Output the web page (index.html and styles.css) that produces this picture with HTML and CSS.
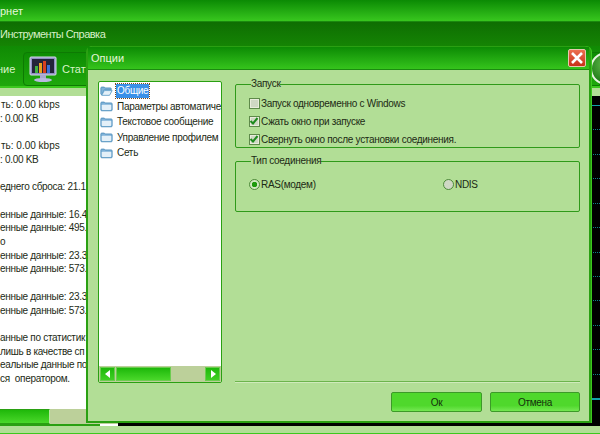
FILE: index.html
```html
<!DOCTYPE html>
<html lang="ru">
<head>
<meta charset="utf-8">
<title>Опции</title>
<link rel="stylesheet" href="styles.css">
</head>
<body>
<div class="app">
  <div class="titlebar">рнет</div>
  <div class="menubar">Инструменты Справка</div>
  <div class="toolbar">
    <span class="tool-text tool-lead">ние</span>
    <div class="tab">
      <svg class="monitor" width="28" height="27" viewBox="0 0 28 27">
        <rect x="1" y="1" width="26" height="18" rx="1" fill="#8f8fc4" stroke="#d8d8ee"/>
        <rect x="3" y="3" width="22" height="14" fill="#23233a"/>
        <rect x="6" y="10" width="3" height="7" fill="#3fb03f"/>
        <rect x="10" y="7" width="3" height="10" fill="#e8a020"/>
        <rect x="14" y="5" width="3" height="12" fill="#d84020"/>
        <rect x="18" y="9" width="3" height="8" fill="#3a70d8"/>
        <rect x="11" y="19" width="6" height="4" fill="#a8a8d0"/>
        <ellipse cx="14" cy="24" rx="9" ry="2" fill="#b8b8e0"/>
      </svg>
      <span class="tool-text">Стати</span>
    </div>
  </div>
  <div class="band"></div>
  <div class="main">
    <div class="stats">
      <div class="stats-text">
        <p class="rate">ть: 0.00 kbps</p>
        <p>: 0.00 KB</p>
        <p>&nbsp;</p>
        <p class="rate">ть: 0.00 kbps</p>
        <p>: 0.00 KB</p>
        <p>&nbsp;</p>
        <p>еднего сброса: 21.1</p>
        <p>&nbsp;</p>
        <p>енные данные: 16.4</p>
        <p>енные данные: 495.</p>
        <p>о</p>
        <p>енные данные: 23.3</p>
        <p>енные данные: 573.</p>
        <p>&nbsp;</p>
        <p>енные данные: 23.3</p>
        <p>енные данные: 573.</p>
        <p>&nbsp;</p>
        <p>анные по статистик</p>
        <p>лишь в качестве сп</p>
        <p>еальные данные по</p>
        <p>ся&nbsp; оператором.</p>
      </div>
      <div class="stats-scroll"><div class="stats-thumb"></div></div>
      <div class="stats-foot"></div>
    </div>
    <div class="chart">
      <div class="chart-grid">
        <div class="cell"></div><div class="cell"></div><div class="cell"></div><div class="cell"></div>
        <div class="cell"></div><div class="cell"></div><div class="cell"></div><div class="cell"></div>
        <div class="cell"></div><div class="cell"></div><div class="cell"></div><div class="cell"></div>
      </div>
    </div>
  </div>
  <div class="statusbar"></div>
</div>

<div class="orb-clip"><div class="orb"></div></div>

<section class="dialog">
  <header class="dialog-title">
    <span>Опции</span>
    <button class="close" aria-label="Закрыть">
      <svg width="14" height="14" viewBox="0 0 14 14"><path d="M2 2 12 12M12 2 2 12" stroke="#fff" stroke-width="2.6"/></svg>
    </button>
  </header>
  <div class="dialog-body">
    <div class="panes">
      <div class="tree">
        <ul class="tree-list">
          <li class="tree-item">
            <svg class="folder" width="13" height="12" viewBox="0 0 15 13"><path d="M1 10V3q0-1 1-1h3l1 1h6q1 0 1 1v1H5L2 11z" fill="#7fb2d8" stroke="#4f8fbc"/><path d="M2 11.500 5 6h9l-3 5.500z" fill="#e4f0f8" stroke="#5f9fc8"/></svg>
            <span class="tree-label selected">Общие</span>
          </li>
          <li class="tree-item">
            <svg class="folder" width="13" height="12" viewBox="0 0 15 13"><use href="#fold"/></svg>
            <span class="tree-label">Параметры автоматичес</span>
          </li>
          <li class="tree-item">
            <svg class="folder" width="13" height="12" viewBox="0 0 15 13"><use href="#fold"/></svg>
            <span class="tree-label">Текстовое сообщение</span>
          </li>
          <li class="tree-item">
            <svg class="folder" width="13" height="12" viewBox="0 0 15 13"><use href="#fold"/></svg>
            <span class="tree-label">Управление профилем</span>
          </li>
          <li class="tree-item">
            <svg class="folder" width="13" height="12" viewBox="0 0 15 13"><use href="#fold"/></svg>
            <span class="tree-label">Сеть</span>
          </li>
        </ul>
        <div class="hscroll">
          <div class="arrow-btn"><svg width="6" height="8" viewBox="0 0 6 8"><path d="M5 0V8L0 4z" fill="#fff"/></svg></div>
          <div class="hthumb"></div>
          <div class="htrack"></div>
          <div class="arrow-btn"><svg width="6" height="8" viewBox="0 0 6 8"><path d="M1 0V8L6 4z" fill="#fff"/></svg></div>
        </div>
      </div>
      <div class="settings">
        <fieldset class="group group-start">
          <legend>Запуск</legend>
          <label class="check"><span class="box"></span>Запуск одновременно с Windows</label>
          <label class="check"><span class="box"><svg width="10" height="10" viewBox="0 0 10 10"><path d="M1.500 5 4 7.500 8.500 2" fill="none" stroke="#1d8a1d" stroke-width="2"/></svg></span>Сжать окно при запуске</label>
          <label class="check"><span class="box"><svg width="10" height="10" viewBox="0 0 10 10"><path d="M1.500 5 4 7.500 8.500 2" fill="none" stroke="#1d8a1d" stroke-width="2"/></svg></span>Свернуть окно после установки соединения.</label>
        </fieldset>
        <fieldset class="group group-type">
          <legend>Тип соединения</legend>
          <div class="radios">
            <label class="radio"><span class="dot on"></span>RAS(модем)</label>
            <label class="radio"><span class="dot"></span>NDIS</label>
          </div>
        </fieldset>
      </div>
    </div>
    <div class="rule"></div>
    <div class="actions">
      <button class="btn btn-ok">Ок</button>
      <button class="btn btn-cancel">Отмена</button>
    </div>
  </div>
</section>

<svg class="defs" width="0" height="0"><defs><g id="fold"><path d="M1 11V3q0-1 1-1h3l1 1h7q1 0 1 1v7q0 1-1 1H2q-1 0-1-1z" fill="#7fb2d8" stroke="#4f8fbc"/><rect x="2" y="5" width="11" height="6" rx="1" fill="#e4f0f8"/></g></defs></svg>
</body>
</html>
```
FILE: styles.css
```css
* { box-sizing: border-box; }
html, body { margin: 0; padding: 0; }
body {
  width: 600px; height: 434px; overflow: hidden; position: relative;
  font-family: "Liberation Sans", "Noto Sans", sans-serif;
  font-size: 10px; letter-spacing: -0.3px; color: #1c2a14; background: #b2de96;
}
.app { display: flex; flex-direction: column; height: 434px; }
.titlebar {
  height: 22px; flex: none; padding-top: 5px; font-size: 11px; letter-spacing: 0; color: #e8f8dc;
  background: linear-gradient(#0b8a04, #38c71e); border-bottom: 1px solid #1a8a0e;
}
.menubar {
  height: 24px; flex: none; padding-top: 6px; font-size: 11px; letter-spacing: -0.5px; color: #d8f0c8;
  background: linear-gradient(#0e6e02, #158404);
}
.toolbar {
  height: 42px; flex: none; display: flex; align-items: center; padding-top: 6px;
  background: linear-gradient(#108a04, #1fa80c);
  border-bottom: 2px solid #3cc81e;
}
.band { height: 8px; flex: none; background: #b2de96; }
.tool-text { font-size: 11px; letter-spacing: 0; color: #d8f4c6; }
.tool-lead { width: 23px; flex: none; text-indent: -3px; }
.tab {
  height: 34px; flex: 1; display: flex; align-items: center; gap: 5px; padding-left: 5px;
  border: 1px solid #0d7a03; border-radius: 4px 0 0 4px; background: linear-gradient(#0d8c03, #1fa80c);
}
.main { flex: 1; display: flex; min-height: 0; }
.stats { width: 118px; flex: none; display: flex; flex-direction: column; background: #fff; }
.stats-text { flex: 1; padding-top: 2px; font-size: 10px; line-height: 13.700px; white-space: nowrap; overflow: hidden; }
.stats-text p { margin: 0; }
.stats-text .rate { padding-left: 1px; letter-spacing: 0; }
.stats-scroll { height: 15px; flex: none; background: #bcd09a; }
.stats-thumb { width: 50px; height: 100%; border: 1px solid #2aa012; border-left: 0; border-right-color: #b8e8a0; background: linear-gradient(#1fb80a, #4ad82a); }
.stats-foot { height: 2px; flex: none; background: linear-gradient(90deg, #2aa012 0 100px, #fff 100px); }
.chart { flex: 1; background: #000; padding-top: 9px; }
.chart-grid { height: 295px; display: flex; flex-direction: column; border-top: 1px solid #12a0aa; border-bottom: 2px solid #12a0aa; }
.cell { flex: 1; border-bottom: 1px dotted #12808a; }
.cell:last-child { border-bottom: 0; }
.statusbar { height: 8px; flex: none; background: #b2de96; border-bottom: 1px solid #3cc81e; }

.orb-clip { position: absolute; left: 590px; top: 52px; width: 10px; height: 33px; overflow: hidden; }
.orb {
  width: 33px; height: 33px; border-radius: 50%;
  border: 2px solid #e8f4e0; background: radial-gradient(circle at 50% 35%, #68c050, #0d6a0a);
}
.defs { position: absolute; }

.dialog {
  position: absolute; left: 86px; top: 46px; width: 505px; height: 377px;
  display: flex; flex-direction: column;
  background: #b2de96; border: 2px solid #2aa012; border-top-width: 1px; border-radius: 6px 6px 0 0;
  box-shadow: 1px 0 0 #3cc81e;
}
.dialog-title {
  height: 23px; flex: none; display: flex; justify-content: space-between; align-items: center;
  padding: 0 3px; font-size: 11px; letter-spacing: 0; color: #e4f6d8;
  background: linear-gradient(#0c8a04, #35c41c); border-bottom: 1px solid #1c8a10;
}
.close {
  width: 18px; height: 18px; padding: 0; display: flex; align-items: center; justify-content: center;
  border: 1px solid #e8c8b0; border-radius: 2px; background: linear-gradient(#ec7050, #c83018);
}
.dialog-body { flex: 1; display: flex; flex-direction: column; padding: 11px 9px 9px 10px; min-height: 0; }
.panes { flex: 1; display: flex; gap: 13px; min-height: 0; }
.tree {
  width: 124px; flex: none; display: flex; flex-direction: column;
  background: #fff; border: 1px solid #2aa012; border-radius: 2px;
}
.tree-list { flex: 1; list-style: none; margin: 0; padding: 1px 0 0 1px; overflow: hidden; }
.tree-item { height: 15.500px; display: flex; align-items: center; gap: 2px; white-space: nowrap; font-size: 10px; }
.folder { flex: none; }
.tree-label { padding: 0 2px; }
.tree-label.selected { width: 33px; margin-left: 1px; padding: 0 1px; line-height: 14px; background: #3a90e8; color: #fff; outline: 1px dotted #7a4a20; }
.hscroll { height: 16px; flex: none; display: flex; padding: 1px; background: #bcd09a; }
.arrow-btn {
  width: 15px; display: flex; align-items: center; justify-content: center;
  background: linear-gradient(#1db80a, #40d024); border: 1px solid #6ccc50;
}
.hthumb { width: 55px; margin-left: 1px; background: linear-gradient(#1db80a, #4ad82a); border: 1px solid #6ccc50; }
.htrack { flex: 1; }
.settings { flex: 1; min-width: 0; display: flex; flex-direction: column; gap: 7px; margin-top: -3px; }
.group { margin: 0; padding: 0 0 0 13px; border: 1px solid #2f9a1a; border-radius: 2px; min-inline-size: 0; }
.group legend { padding: 0; margin-left: 2px; font-size: 10px; line-height: 12px; }
.group-start { height: 70px; padding-top: 4px; }
.group-type { height: 57px; padding-top: 10px; }
.check { display: flex; align-items: center; gap: 1px; height: 18px; font-size: 10px; white-space: nowrap; }
.box {
  width: 11px; height: 11px; flex: none; display: flex; background: #cfd8c4;
  border: 1px solid #5e8a4a; box-shadow: inset 0 0 0 1px #e8ecdc;
}
.box svg { margin: -1px; }
.radios { display: grid; grid-template-columns: 194px 1fr; }
.radio { display: flex; align-items: center; gap: 1px; height: 14px; font-size: 10px; }
.dot { width: 11px; height: 11px; flex: none; border: 1px solid #4e8a3a; border-radius: 50%; background: #cfd8c4; }
.dot.on { background: radial-gradient(circle, #1d9a0d 0 2.500px, #cfe8c0 3px); }
.rule { height: 2px; flex: none; margin: -2px 0 0 137px; background: #6cb44c; border-bottom: 1px solid #cfeabb; position: relative; }
.actions { display: flex; justify-content: flex-end; gap: 8px; padding-top: 9px; flex: none; }
.btn {
  height: 20px; padding: 0; font: 10px "Liberation Sans", "Noto Sans", sans-serif; letter-spacing: -0.3px; color: #14300c;
  background: linear-gradient(#4fd82c 70%, #74e852); border: 1px solid #3c9a28; border-radius: 2px;
}
.btn-ok { width: 91px; }
.btn-cancel { width: 90px; }
```
